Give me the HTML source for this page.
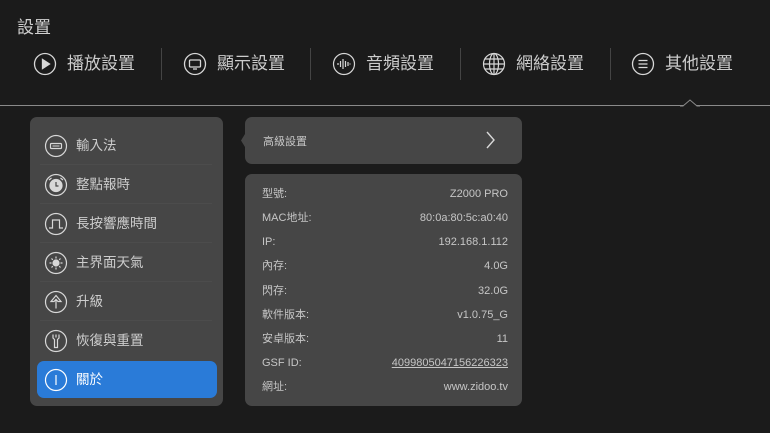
<!DOCTYPE html>
<html><head><meta charset="utf-8"><style>
*{margin:0;padding:0;box-sizing:border-box}
body{width:770px;height:433px;background:#1b1b1b;font-family:"Liberation Sans","Noto Sans CJK TC",sans-serif;color:#cfcfcf;position:relative;overflow:hidden}
.abs{position:absolute}
.title{left:17px;top:13px;font-size:17px;color:#d0d0d0}
.nav{top:52px;font-size:17px;line-height:24px;color:#cccccc}
.div{top:48px;width:1px;height:32px;background:#444}
.line{left:0;top:105px;width:770px;height:1px;background:#8a8a8a}
.panel{background:#464646;border-radius:7px}
.item{left:38px;width:180px;height:37px;font-size:13.5px;line-height:37px;padding-left:38px;color:#cccccc}
.item svg{position:absolute;left:6px;top:7px}
.sep{left:40px;width:172px;height:1px;background:#4c4c4c}
.row{left:262px;width:246px;font-size:11px;color:#c6c6c6;height:16px;line-height:16px}
.row span{float:right}
</style></head><body>
<div class="abs title">設置</div>

<svg class="abs" style="left:33px;top:52px" width="24" height="24" viewBox="0 0 24 24" fill="none" stroke="#d8d8d8" stroke-width="1.3"><circle cx="12" cy="12" r="10.5"/><path d="M9.5 7.5v9l7-4.5z" fill="#d8d8d8"/></svg>
<div class="abs nav" style="left:67px">播放設置</div>
<div class="abs div" style="left:161px"></div>
<svg class="abs" style="left:183px;top:52px" width="24" height="24" viewBox="0 0 24 24" fill="none" stroke="#d8d8d8" stroke-width="1.3"><circle cx="12" cy="12" r="10.5"/><rect x="6.5" y="8" width="11" height="7" rx="1"/><path d="M10 17h4"/></svg>
<div class="abs nav" style="left:217px">顯示設置</div>
<div class="abs div" style="left:310px"></div>
<svg class="abs" style="left:332px;top:52px" width="24" height="24" viewBox="0 0 24 24" fill="none" stroke="#d8d8d8" stroke-width="1.2"><circle cx="12" cy="12" r="10.5"/><path d="M6 11v2M8.5 9v6M11 7v10M13.5 9v6M16 10v4M18 11.5v1"/></svg>
<div class="abs nav" style="left:366px">音頻設置</div>
<div class="abs div" style="left:460px"></div>
<svg class="abs" style="left:482px;top:52px" width="24" height="24" viewBox="0 0 24 24" fill="none" stroke="#d8d8d8" stroke-width="1.2"><circle cx="12" cy="12" r="10.5"/><ellipse cx="12" cy="12" rx="4.5" ry="10.5"/><path d="M12 1.5v21M1.5 12h21M3 7h18M3 17h18"/></svg>
<div class="abs nav" style="left:516px">網絡設置</div>
<div class="abs div" style="left:610px"></div>
<svg class="abs" style="left:631px;top:52px" width="24" height="24" viewBox="0 0 24 24" fill="none" stroke="#d8d8d8" stroke-width="1.3"><circle cx="12" cy="12" r="10.5"/><path d="M7.5 8.5h9M7.5 12h9M7.5 15.5h9"/></svg>
<div class="abs nav" style="left:665px">其他設置</div>

<div class="abs line"></div>
<svg class="abs" style="left:680px;top:98px" width="20" height="9"><path d="M0 8h3l7-6 7 6h3" fill="#1b1b1b" stroke="#8a8a8a" stroke-width="1"/></svg>

<div class="abs panel" style="left:30px;top:117px;width:193px;height:289px"></div>
<div class="abs" style="left:37px;top:361px;width:180px;height:37px;background:#2a7bd8;border-radius:7px"></div>

<div class="abs item" style="top:127px"><svg width="24" height="24" viewBox="0 0 24 24" fill="none" stroke="#d8d8d8" stroke-width="1.2"><circle cx="12" cy="12" r="10.5"/><rect x="6.5" y="9.5" width="11" height="5" rx="1"/><path d="M8.5 12h7" stroke-width="1"/></svg>輸入法</div>
<div class="abs sep" style="top:164px"></div>
<div class="abs item" style="top:166px"><svg width="24" height="24" viewBox="0 0 24 24" fill="none" stroke="#d8d8d8" stroke-width="1.2"><circle cx="12" cy="12" r="10.5"/><circle cx="12" cy="12.5" r="6" fill="#d8d8d8"/><path d="M12 9v4h2.5" stroke="#464646"/><path d="M5 7l2.5-2M19 7l-2.5-2"/></svg>整點報時</div>
<div class="abs sep" style="top:203px"></div>
<div class="abs item" style="top:205px"><svg width="24" height="24" viewBox="0 0 24 24" fill="none" stroke="#d8d8d8" stroke-width="1.2"><circle cx="12" cy="12" r="10.5"/><path d="M5 16h3.5V8h7v8H19"/></svg>長按響應時間</div>
<div class="abs sep" style="top:242px"></div>
<div class="abs item" style="top:244px"><svg width="24" height="24" viewBox="0 0 24 24" fill="none" stroke="#d8d8d8" stroke-width="1.2"><circle cx="12" cy="12" r="10.5"/><circle cx="12" cy="12" r="3" fill="#d8d8d8"/><path d="M12 5.5v2M12 16.5v2M5.5 12h2M16.5 12h2M7.5 7.5l1.3 1.3M15.2 15.2l1.3 1.3M7.5 16.5l1.3-1.3M15.2 8.8l1.3-1.3"/></svg>主界面天氣</div>
<div class="abs sep" style="top:281px"></div>
<div class="abs item" style="top:283px"><svg width="24" height="24" viewBox="0 0 24 24" fill="none" stroke="#d8d8d8" stroke-width="1.2"><circle cx="12" cy="12" r="10.5"/><path d="M12 5.5l5 6h-3l-2-2-2 2H7zM12 9.5v9"/></svg>升級</div>
<div class="abs sep" style="top:320px"></div>
<div class="abs item" style="top:322px"><svg width="24" height="24" viewBox="0 0 24 24" fill="none" stroke="#d8d8d8" stroke-width="1.2"><circle cx="12" cy="12" r="10.5"/><path d="M9 5.5v3.5l1.5 1.5v8h3v-8l1.5-1.5V5.5M12 5.5v3"/></svg>恢復與重置</div>
<div class="abs item" style="top:361px;color:#fff"><svg width="24" height="24" viewBox="0 0 24 24" fill="none" stroke="#fff" stroke-width="1.2"><circle cx="12" cy="12" r="10.5"/><path d="M12 7v10"/></svg>關於</div>

<svg class="abs" style="left:240px;top:117px" width="10" height="47"><path d="M5 17L1 23.5 5 30z" fill="#464646"/></svg>
<div class="abs panel" style="left:245px;top:117px;width:277px;height:47px"></div>
<div class="abs" style="left:263px;top:133px;font-size:11px;color:#c6c6c6">高級設置</div>
<svg class="abs" style="left:484px;top:130px" width="14" height="20"><path d="M3 2l7 8-7 8" fill="none" stroke="#d8d8d8" stroke-width="1.4"/></svg>

<div class="abs panel" style="left:245px;top:174px;width:277px;height:232px"></div>
<div class="abs row" style="top:186px">型號:<span>Z2000 PRO</span></div>
<div class="abs row" style="top:210px">MAC地址:<span>80:0a:80:5c:a0:40</span></div>
<div class="abs row" style="top:234px">IP:<span>192.168.1.112</span></div>
<div class="abs row" style="top:258px">內存:<span>4.0G</span></div>
<div class="abs row" style="top:283px">閃存:<span>32.0G</span></div>
<div class="abs row" style="top:307px">軟件版本:<span>v1.0.75_G</span></div>
<div class="abs row" style="top:331px">安卓版本:<span>11</span></div>
<div class="abs row" style="top:355px">GSF ID:<span style="text-decoration:underline">4099805047156226323</span></div>
<div class="abs row" style="top:379px">網址:<span>www.zidoo.tv</span></div>
</body></html>
